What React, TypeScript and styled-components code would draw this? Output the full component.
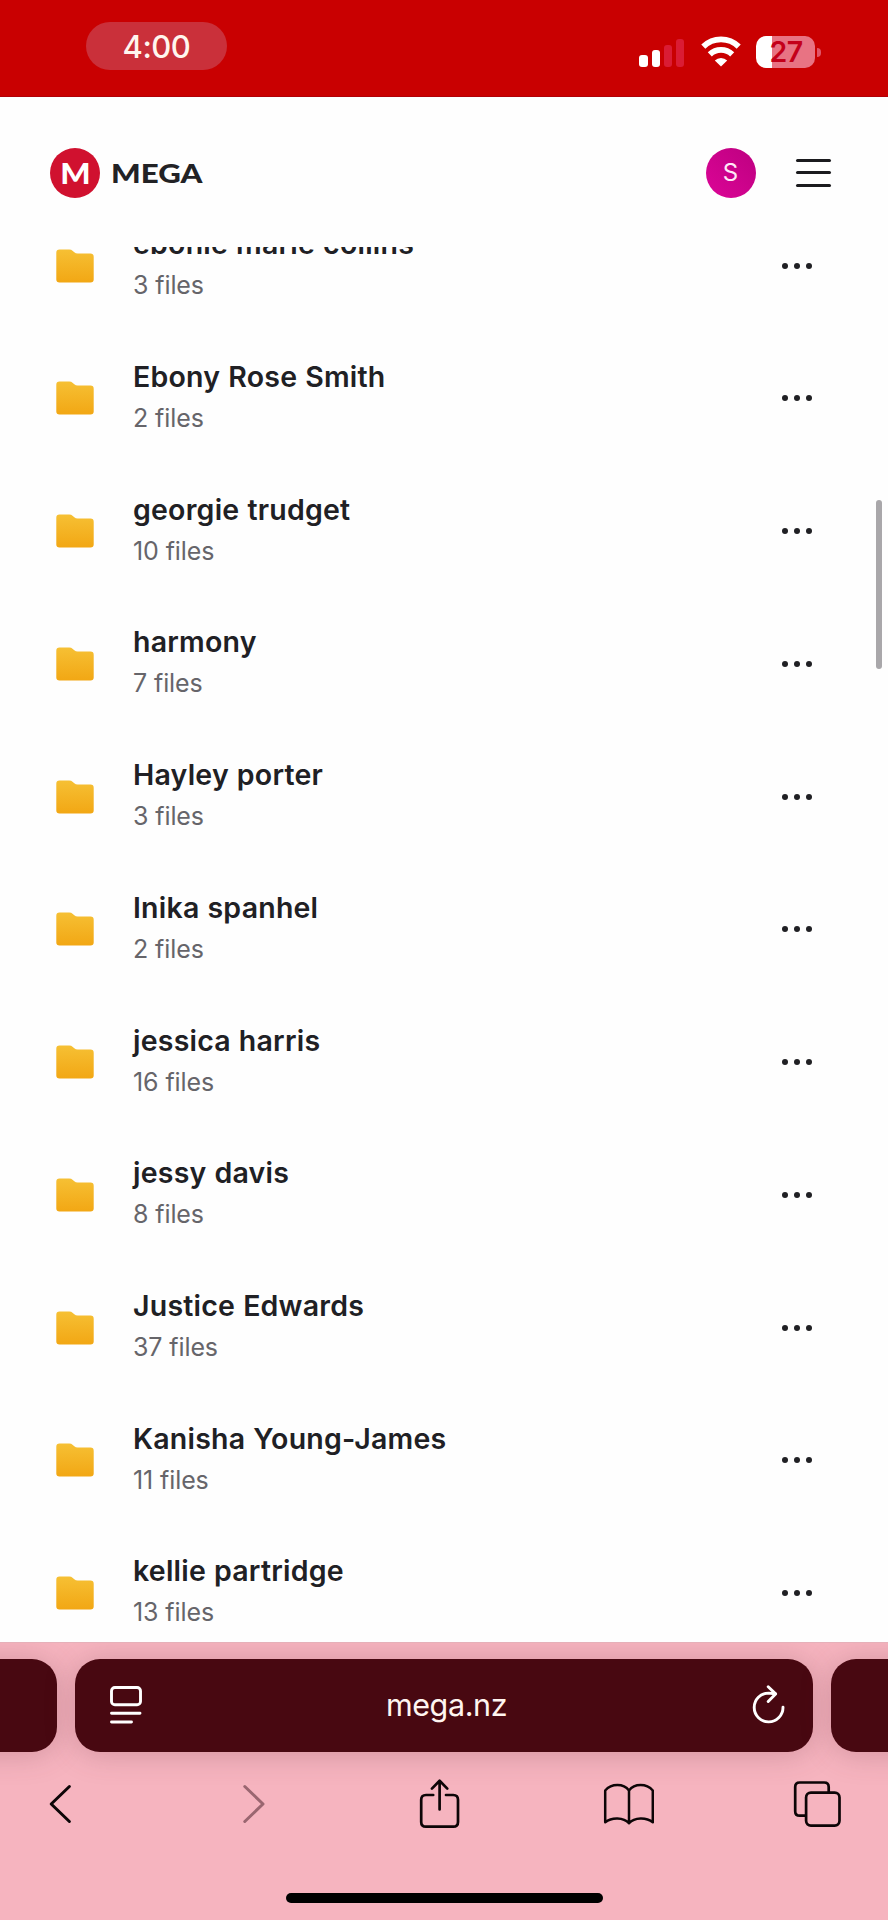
import React from "react";
import styled, { createGlobalStyle } from "styled-components";

const GlobalStyle = createGlobalStyle`
  * { box-sizing: border-box; }
  body {
    margin: 0;
    background: #fefefe;
    font-family: Inter, "Liberation Sans", sans-serif;
    -webkit-font-smoothing: antialiased;
  }
`;

const Screen = styled.div`
  position: relative;
  display: flex;
  flex-direction: column;
  width: 888px;
  height: 1920px;
  overflow: hidden;
  background: #fefefe;
`;

const StatusBar = styled.header`
  display: flex;
  align-items: flex-start;
  justify-content: space-between;
  height: 97px;
  padding: 22px 67px 0 86px;
  background: #c90001;
  border-bottom: 1px solid #b00008;
`;

const TimePill = styled.div`
  display: flex;
  align-items: center;
  justify-content: center;
  width: 141px;
  height: 48px;
  padding-top: 1.5px;
  border-radius: 24px;
  background: #ca303a;
  color: #fff6ee;
  font-size: 31px;
  font-weight: 500;
  line-height: 48px;
  letter-spacing: -0.5px;
`;

const StatusIcons = styled.div`
  display: flex;
  align-items: flex-start;
  padding-top: 14px;
`;

const Signal = styled.div`
  display: flex;
  align-items: flex-end;
  gap: 4px;
  height: 31px;
  margin-right: 17px;
`;

const SignalBar = styled.span<{ $height: number; $on?: boolean }>`
  width: ${(p) => (p.$on ? 8.5 : 8)}px;
  height: ${(p) => p.$height}px;
  border-radius: 3px;
  background: ${(p) => (p.$on ? "#fff" : "#da1c34")};
`;

const Battery = styled.div`
  display: flex;
  align-items: center;
  gap: 2px;
  margin-left: 15px;
`;

const BatteryBody = styled.div`
  width: 59px;
  height: 32px;
  padding-left: 1px;
  border-radius: 10px;
  background: linear-gradient(90deg, #fff 0 16px, #e87383 16px);
  color: #c4001a;
  font-size: 28.5px;
  font-weight: 600;
  line-height: 32px;
  text-align: center;
  letter-spacing: -0.6px;
`;

const BatteryTip = styled.span`
  width: 4px;
  height: 9px;
  border-radius: 0 4px 4px 0;
  background: #e0566a;
`;

const SiteHeader = styled.div`
  display: flex;
  align-items: center;
  flex: none;
  height: 149.5px;
  padding: 2px 57px 0 50px;
`;

const LogoMark = styled.div`
  display: flex;
  align-items: center;
  justify-content: center;
  width: 50px;
  height: 50px;
  border-radius: 50%;
  background: #d0112f;
  color: #fff;
`;

const MarkLetter = styled.span`
  font-family: Lato, "Liberation Sans", sans-serif;
  font-size: 28px;
  font-weight: 900;
  line-height: 28px;
  transform: scaleX(1.14);
`;

const Wordmark = styled.div`
  flex: 1;
  padding: 2px 0 0 11px;
  color: #222225;
  font-family: Lato, "Liberation Sans", sans-serif;
  font-size: 25.8px;
  font-weight: 900;
  line-height: 1;
  transform: scaleX(1.21);
  transform-origin: 11px center;
`;

const Avatar = styled.div`
  width: 50px;
  height: 50px;
  margin-right: 0.5px;
  border-radius: 50%;
  background: linear-gradient(45deg, #dc0597, #bd0080);
  color: #ffe9f8;
  font-size: 24px;
  line-height: 49px;
  text-align: center;
`;

const MenuButton = styled.div`
  display: flex;
  flex-direction: column;
  gap: 9.7px;
  width: 35px;
  margin-left: 40px;
`;

const MenuLine = styled.span`
  height: 3px;
  border-radius: 2px;
  background: #1b1b1e;
`;

const ListViewport = styled.main`
  flex: none;
  height: 1395.5px;
  overflow: hidden;
`;

const List = styled.ul`
  margin: -47.1px 0 0;
  padding: 0;
  list-style: none;
`;

const Row = styled.li`
  display: flex;
  align-items: center;
  height: 132.72px;
  padding: 0 75.7px 0 56px;
`;

const RowText = styled.div`
  flex: 1;
  padding: 0 0 2px 39px;
`;

const FolderName = styled.div`
  color: #202024;
  font-size: 28.5px;
  font-weight: 600;
  line-height: 42px;
  letter-spacing: 0.22px;
  word-spacing: 0.6px;
  white-space: nowrap;
`;

const FileCount = styled.div`
  color: #66656a;
  font-size: 25px;
  font-weight: 400;
  line-height: 41px;
  letter-spacing: -0.1px;
`;

const Dots = styled.div`
  display: flex;
  gap: 6.4px;
`;

const Dot = styled.span`
  width: 6px;
  height: 6px;
  border-radius: 50%;
  background: #202024;
`;

const ScrollThumb = styled.div`
  position: absolute;
  top: 500px;
  right: 6px;
  width: 6px;
  height: 169px;
  border-radius: 3px;
  background: #a9a7aa;
`;

const BrowserChrome = styled.footer`
  display: flex;
  flex-direction: column;
  flex: none;
  height: 278px;
  background: #f6b4bf;
  border-top: 1px solid #e6b0b9;
  overflow: hidden;
`;

const TabStrip = styled.div`
  display: flex;
  flex: none;
  justify-content: center;
  gap: 18px;
  height: 92.5px;
  margin: 16px -400px 0;
`;

const Tab = styled.div`
  display: flex;
  align-items: center;
  justify-content: space-between;
  flex: none;
  width: 737.6px;
  padding: 0 28px 0 35px;
  border-radius: 25px;
  background: #480811;
  color: #fff5f0;
  box-shadow: 0 2px 30px rgba(110, 50, 65, 0.26);
`;

const Address = styled.span`
  font-size: 30.5px;
  line-height: 40px;
  letter-spacing: -0.4px;
`;

const Toolbar = styled.nav`
  display: grid;
  grid-template-columns: repeat(5, 1fr);
  flex: none;
  align-items: center;
  justify-items: center;
  height: 60px;
  margin: 22px -24px 0 -35px;
`;

const HomeIndicator = styled.div`
  align-self: center;
  width: 317px;
  height: 10px;
  margin-top: 59px;
  border-radius: 5px;
  background: #000;
`;

const FolderIcon = () => (
  <svg width="38" height="34" viewBox="0 0 38 34">
    <defs>
      <linearGradient id="folder" x1="0" y1="0" x2="0" y2="1">
        <stop offset="0" stopColor="#f6c034" />
        <stop offset="1" stopColor="#f2a714" />
      </linearGradient>
    </defs>
    <path
      d="M3.5 0.5H13.2Q15.3 0.5 16.8 1.9L18.3 3.2Q19.7 4.5 21.7 4.5H34.5Q37.7 4.5 37.7 7.7V30.5Q37.7 33.5 34.5 33.5H3.5Q0.3 33.5 0.3 30.5V3.7Q0.3 0.5 3.5 0.5Z"
      fill="url(#folder)"
    />
  </svg>
);

const WifiIcon = () => (
  <svg width="40" height="31" viewBox="0 0 40 31" fill="none" stroke="#fff" strokeWidth="5.8">
    <path d="M2.3 10.6A25.2 25.2 0 0 1 37.7 10.6" />
    <path d="M8.8 18.4A16 16 0 0 1 31.2 18.4" />
    <path d="M20 30.5L13.8 24.6A8.8 8.8 0 0 1 26.2 24.6Z" fill="#fff" stroke="none" />
  </svg>
);

const ReaderIcon = () => (
  <svg width="32" height="38" viewBox="0 0 32 38" fill="none" stroke="#fff" strokeWidth="2.9" strokeLinecap="round">
    <rect x="1.5" y="1.5" width="29" height="17.3" rx="3.4" />
    <path d="M1.5 27.2H30M1.5 36H21.5" />
  </svg>
);

const ReloadIcon = () => (
  <svg width="34" height="40" viewBox="0 0 34 40" fill="none" stroke="#fff" strokeWidth="2.9" strokeLinecap="round" strokeLinejoin="round">
    <path d="M32 22.3A14.4 14.4 0 1 1 17.6 8.1L24.2 8.7" />
    <path d="M17.2 1.7L24.6 8.9L17.2 16.5" />
  </svg>
);

const BackIcon = () => (
  <svg width="30" height="40" viewBox="0 0 30 40" fill="none" stroke="#0d0507" strokeWidth="3" strokeLinecap="round" strokeLinejoin="round">
    <path d="M24.4 2.5L6.2 20L24.4 37.5" />
  </svg>
);

const ForwardIcon = () => (
  <svg width="40" height="40" viewBox="0 0 40 40" fill="none" stroke="#9a6670" strokeWidth="3" strokeLinecap="round" strokeLinejoin="round">
    <path d="M15.8 2.5L34 20L15.8 37.5" />
  </svg>
);

const ShareIcon = () => (
  <svg width="44" height="52" viewBox="0 0 44 52" fill="none" stroke="#0d0507" strokeWidth="2.7" strokeLinecap="round" strokeLinejoin="round">
    <path d="M17.2 17H10Q5.2 17 5.2 21.8V43.9Q5.2 48.7 10 48.7H37.2Q42 48.7 42 43.9V21.8Q42 17 37.2 17H30" />
    <path d="M23.6 31.5V3M15.9 10.6L23.6 2.7L31.3 10.6" />
  </svg>
);

const BookIcon = () => (
  <svg width="52" height="44" viewBox="0 0 52 44" fill="none" stroke="#0d0507" strokeWidth="2.5" strokeLinecap="round" strokeLinejoin="round">
    <path d="M27 8.5C21.5 1.2 9.5 1.2 3.2 8.5V40.3C9.5 35.2 21.5 35 27 41.3C32.5 35 44.5 35.2 50.8 40.3V8.5C44.5 1.2 32.5 1.2 27 8.5V41" />
  </svg>
);

const TabsIcon = () => (
  <svg width="50" height="48" viewBox="0 0 50 48" fill="none" stroke="#0d0507" strokeWidth="2.7" strokeLinecap="round" strokeLinejoin="round">
    <path d="M13 35.7H7.7Q3.2 35.7 3.2 31.2V7Q3.2 2.5 7.7 2.5H32.2Q36.7 2.5 36.7 7V12.5" />
    <rect x="14.1" y="12.6" width="33.4" height="33" rx="4.8" />
  </svg>
);

const folders = [
  { name: "ebonie marie collins", count: 3 },
  { name: "Ebony Rose Smith", count: 2 },
  { name: "georgie trudget", count: 10 },
  { name: "harmony", count: 7 },
  { name: "Hayley porter", count: 3 },
  { name: "Inika spanhel", count: 2 },
  { name: "jessica harris", count: 16 },
  { name: "jessy davis", count: 8 },
  { name: "Justice Edwards", count: 37 },
  { name: "Kanisha Young-James", count: 11 },
  { name: "kellie partridge", count: 13 },
];

export default function App() {
  return (
    <Screen>
      <GlobalStyle />
      <StatusBar>
        <TimePill>4:00</TimePill>
        <StatusIcons>
          <Signal>
            <SignalBar $height={12} $on />
            <SignalBar $height={17} $on />
            <SignalBar $height={22} />
            <SignalBar $height={28} />
          </Signal>
          <WifiIcon />
          <Battery>
            <BatteryBody>27</BatteryBody>
            <BatteryTip />
          </Battery>
        </StatusIcons>
      </StatusBar>

      <SiteHeader>
        <LogoMark>
          <MarkLetter>M</MarkLetter>
        </LogoMark>
        <Wordmark>MEGA</Wordmark>
        <Avatar>S</Avatar>
        <MenuButton>
          <MenuLine />
          <MenuLine />
          <MenuLine />
        </MenuButton>
      </SiteHeader>

      <ListViewport>
        <List>
          {folders.map((folder) => (
            <Row key={folder.name}>
              <FolderIcon />
              <RowText>
                <FolderName>{folder.name}</FolderName>
                <FileCount>{folder.count} files</FileCount>
              </RowText>
              <Dots>
                <Dot />
                <Dot />
                <Dot />
              </Dots>
            </Row>
          ))}
        </List>
      </ListViewport>
      <ScrollThumb />

      <BrowserChrome>
        <TabStrip>
          <Tab />
          <Tab>
            <ReaderIcon />
            <Address>mega.nz</Address>
            <ReloadIcon />
          </Tab>
          <Tab />
        </TabStrip>
        <Toolbar>
          <BackIcon />
          <ForwardIcon />
          <ShareIcon />
          <BookIcon />
          <TabsIcon />
        </Toolbar>
        <HomeIndicator />
      </BrowserChrome>
    </Screen>
  );
}
